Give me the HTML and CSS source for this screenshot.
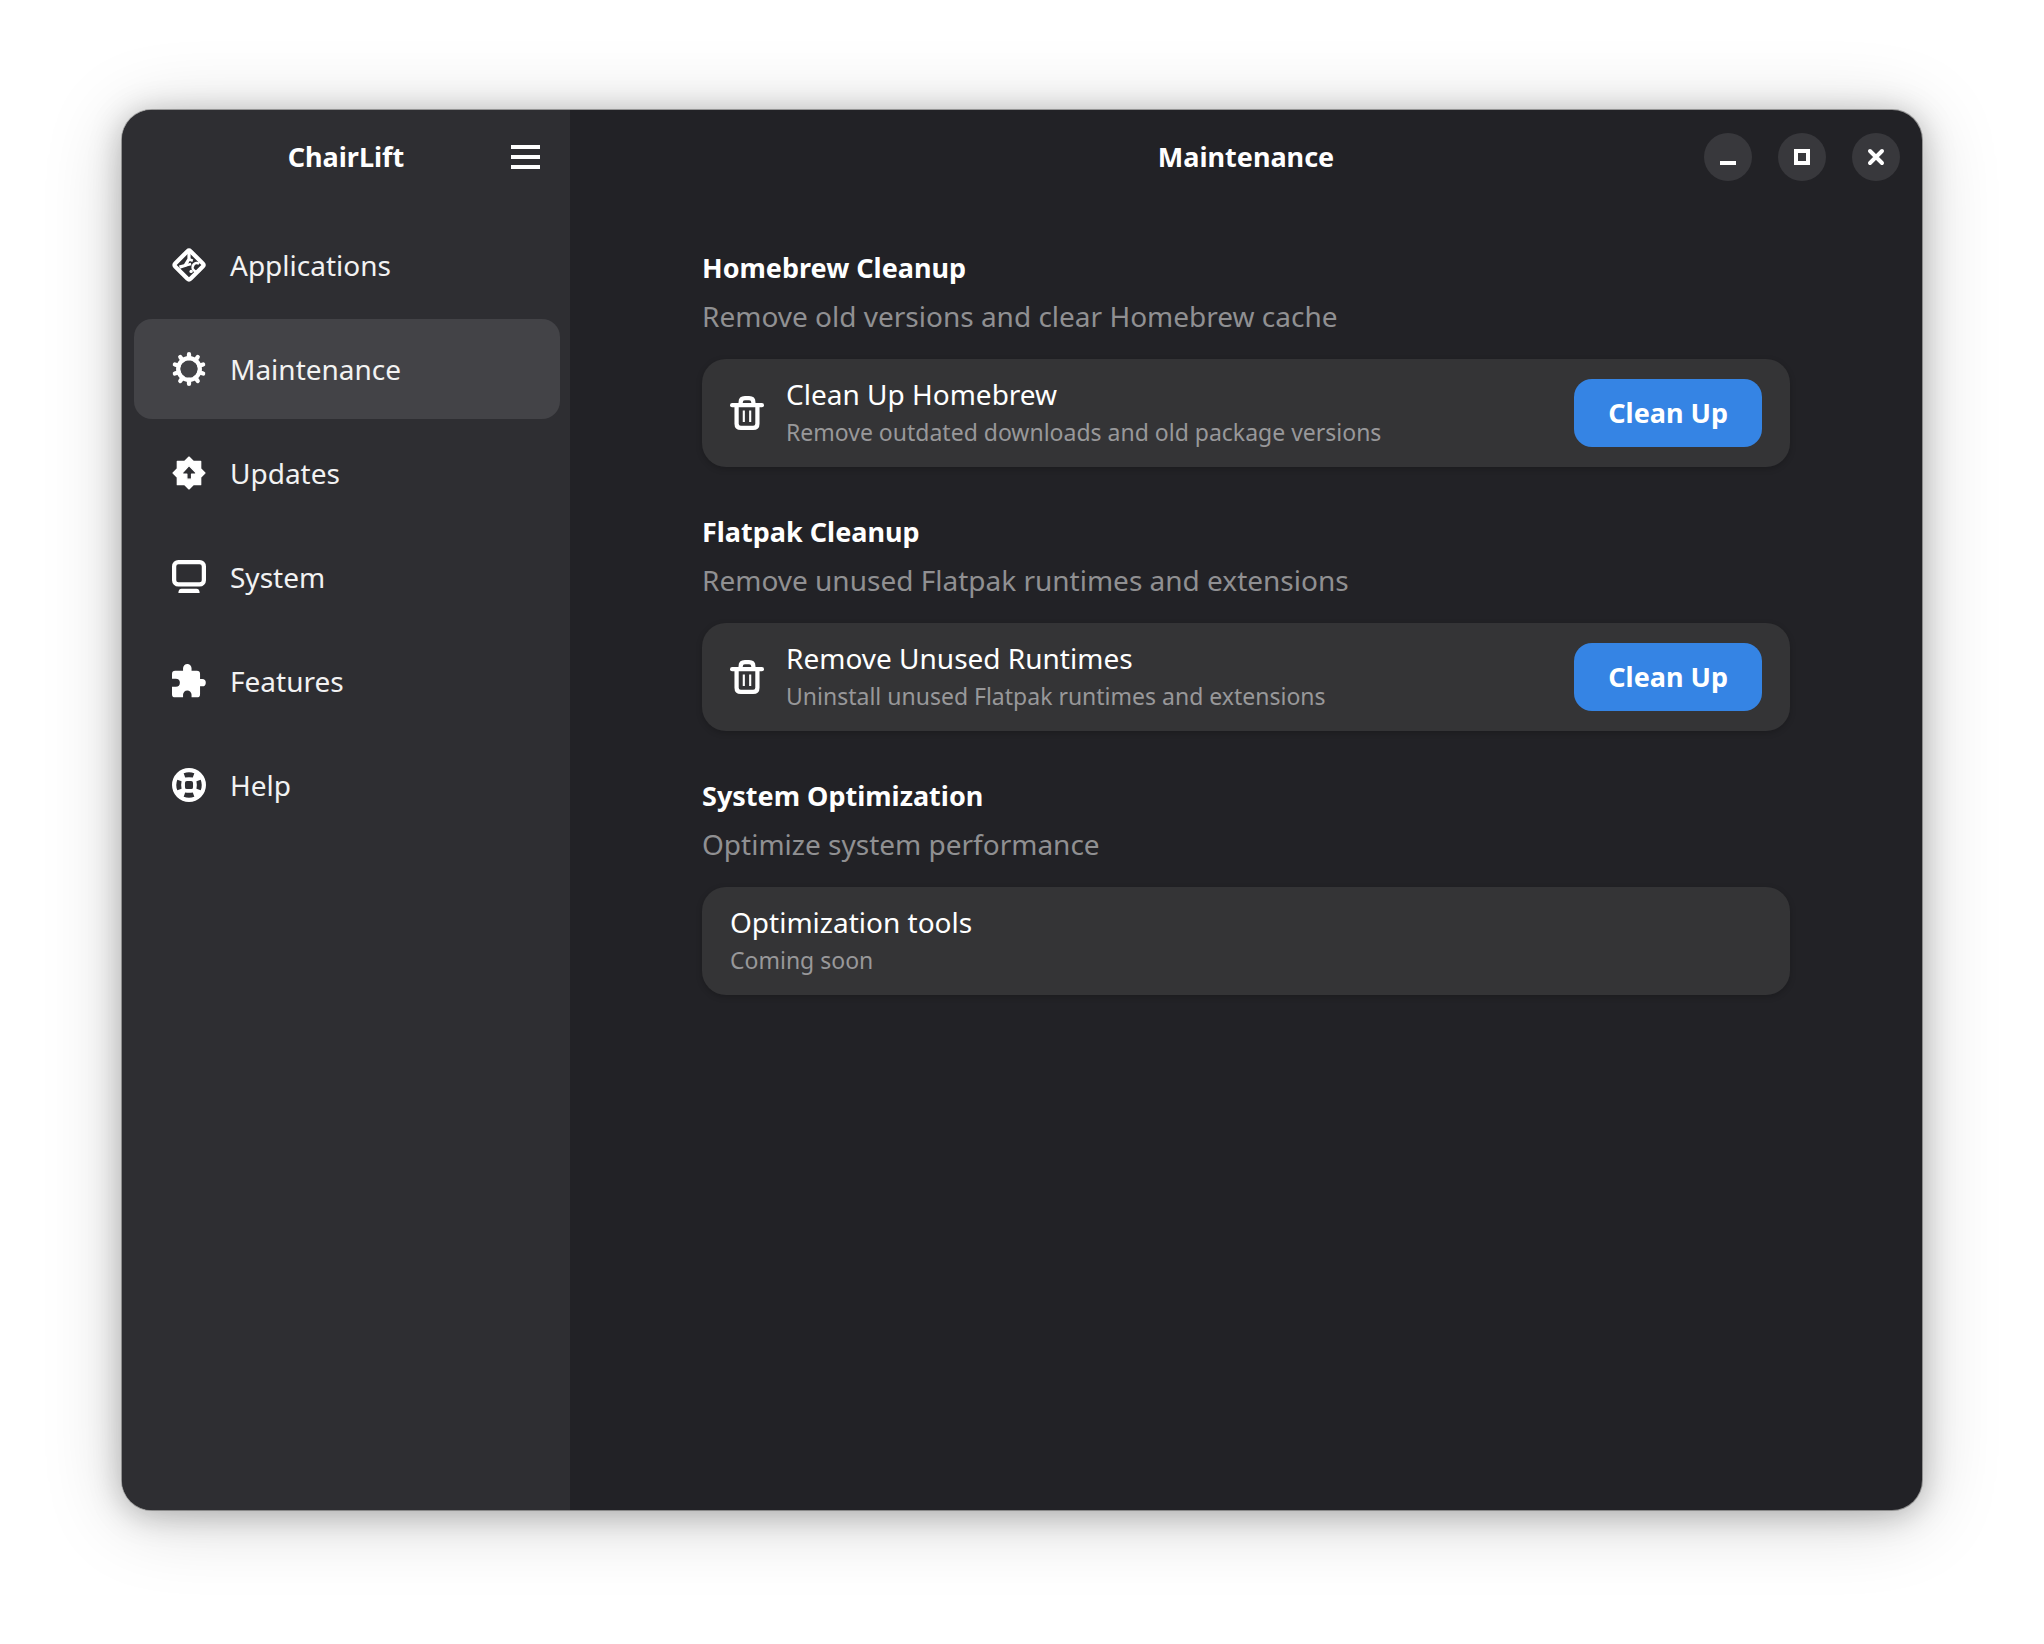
FILE: index.html
```html
<!DOCTYPE html>
<html lang="en">
<head>
    <meta charset="UTF-8">
    <meta name="viewport" content="width=device-width, initial-scale=1.0">
    <title>ChairLift</title>
    <link rel="stylesheet" href="styles.css">
</head>
<body>

    <!-- Shared icon shapes -->
    <svg class="sprite" aria-hidden="true">
        <symbol id="icon-trash" viewBox="0 0 16 16">
            <path d="M1 4.300h14" stroke="currentColor" stroke-width="2" stroke-linecap="round"/>
            <path d="M5 4V3q0-2 2-2h2q2 0 2 2v1M3.100 5v8q0 2 2 2h5.800q2 0 2-2V5" fill="none" stroke="currentColor" stroke-width="2"/>
            <path d="M6.500 6.800v5.400M9.500 6.800v5.400" stroke="currentColor" stroke-width="1"/>
        </symbol>
    </svg>

    <div class="window">
        <aside class="sidebar">
            <header class="headerbar">
                <h1 class="title">ChairLift</h1>
                <button class="menu-button" aria-label="Main menu">
                    <svg class="icon" viewBox="0 0 34 34"><path d="M2 7h29M2 17h29M2 27h29" stroke="currentColor" stroke-width="4"/></svg>
                </button>
            </header>
            <nav class="nav">
                <a class="nav-item" href="#applications">
                    <svg class="icon" viewBox="0 0 16 16">
                        <path d="M7.300 1.500 1.500 7.300q-.7.700 0 1.400l5.800 5.800q.7.700 1.400 0l5.800-5.800q.7-.7 0-1.400L8.700 1.500q-.7-.7-1.400 0z" fill="none" stroke="currentColor" stroke-width="2"/>
                        <path d="M8 2v3.200L6.200 8.200 3.500 9" fill="none" stroke="currentColor" stroke-width="1.500"/>
                        <path d="M6.200 8.200 9 7.500M8 5.300l1.800.7" stroke="currentColor" stroke-width="1.200"/>
                        <path d="M12.800 7.400a2 2 0 1 0 .2 3.200" fill="none" stroke="currentColor" stroke-width="1.200"/>
                        <circle cx="9" cy="11" r=".8" fill="currentColor"/>
                    </svg>
                    Applications
                </a>
                <a class="nav-item active" href="#maintenance" aria-current="page">
                    <svg class="icon" viewBox="0 0 16 16">
                        <circle cx="8" cy="8" r="5.100" fill="none" stroke="currentColor" stroke-width="2"/>
                        <g stroke="currentColor" stroke-width="2" stroke-linecap="round">
                            <path d="M8 1v2M8 13v2"/>
                            <path d="M8 1v2M8 13v2" transform="rotate(36 8 8)"/>
                            <path d="M8 1v2M8 13v2" transform="rotate(72 8 8)"/>
                            <path d="M8 1v2M8 13v2" transform="rotate(108 8 8)"/>
                            <path d="M8 1v2M8 13v2" transform="rotate(144 8 8)"/>
                        </g>
                    </svg>
                    Maintenance
                </a>
                <a class="nav-item" href="#updates">
                    <svg class="icon" viewBox="0 0 16 16">
                        <path d="M8 .500 10 2.500h3.500V6l2 2-2 2v3.500H10l-2 2-2-2H2.500V10l-2-2 2-2V2.500H6zM8 4.500 5 7.800v.7h2v2.400h2.200V8.500h2v-.7z" fill="currentColor" fill-rule="evenodd" stroke="currentColor" stroke-width=".6" stroke-linejoin="round"/>
                    </svg>
                    Updates
                </a>
                <a class="nav-item" href="#system">
                    <svg class="icon" viewBox="0 0 16 16">
                        <rect x="1" y="1" width="14" height="10.500" rx="2" fill="none" stroke="currentColor" stroke-width="2"/>
                        <path d="M4.500 13.500h7q1.500 0 1.500 2H3q0-2 1.500-2z" fill="currentColor"/>
                    </svg>
                    System
                </a>
                <a class="nav-item" href="#features">
                    <svg class="icon" viewBox="0 0 16 16">
                        <path d="M1.500 3.200H5.200V2a2 2 0 0 1 4 0v1.200h2.500q1.500 0 1.500 1.500v2.400h1a1.700 1.700 0 0 1 0 3.400h-1v3.700q0 1.500-1.500 1.500H9.200v-1.200a2 2 0 0 0-4 0v1.200H1.500Q0 15.700 0 14.200v-3.500h1.800a1.900 1.900 0 0 0 0-3.800H0V4.700q0-1.500 1.500-1.500z" fill="currentColor"/>
                    </svg>
                    Features
                </a>
                <a class="nav-item" href="#help">
                    <svg class="icon" viewBox="0 0 16 16">
                        <path d="M8 0a8 8 0 1 0 0 16A8 8 0 1 0 8 0zM5.500 2.500Q8 1.500 10.500 2.500L9.800 4.500Q8 4.100 6.200 4.500zM5.500 13.500Q8 14.500 10.500 13.500L9.800 11.500Q8 11.900 6.200 11.500zM2.500 5.500Q1.500 8 2.500 10.500L4.500 9.800Q4.100 8 4.500 6.200zM13.500 5.500Q14.500 8 13.500 10.500L11.500 9.800Q11.900 8 11.500 6.200zM7 6.100h2q.9 0 .9.900v2q0 .9-.9.900H7q-.9 0-.9-.9V7q0-.9.9-.9z" fill="currentColor" fill-rule="evenodd"/>
                    </svg>
                    Help
                </a>
            </nav>
        </aside>

        <main class="content">
            <header class="headerbar">
                <h2 class="title">Maintenance</h2>
                <div class="window-controls">
                    <button class="control" aria-label="Minimize">
                        <svg viewBox="0 0 48 48"><path d="M16 30h16" stroke="currentColor" stroke-width="4"/></svg>
                    </button>
                    <button class="control" aria-label="Maximize">
                        <svg viewBox="0 0 48 48"><path d="M18 18h12v12H18z" fill="none" stroke="currentColor" stroke-width="4"/></svg>
                    </button>
                    <button class="control" aria-label="Close">
                        <svg viewBox="0 0 48 48"><path d="m18 18 12 12M30 18 18 30" stroke="currentColor" stroke-width="4" stroke-linecap="round"/></svg>
                    </button>
                </div>
            </header>

            <div class="page">
                <section class="group">
                    <h3 class="group-title">Homebrew Cleanup</h3>
                    <p class="group-desc">Remove old versions and clear Homebrew cache</p>
                    <div class="card">
                        <svg class="icon"><use href="#icon-trash"/></svg>
                        <div class="card-text">
                            <p class="card-title">Clean Up Homebrew</p>
                            <p class="card-subtitle">Remove outdated downloads and old package versions</p>
                        </div>
                        <button class="button">Clean Up</button>
                    </div>
                </section>

                <section class="group">
                    <h3 class="group-title">Flatpak Cleanup</h3>
                    <p class="group-desc">Remove unused Flatpak runtimes and extensions</p>
                    <div class="card">
                        <svg class="icon"><use href="#icon-trash"/></svg>
                        <div class="card-text">
                            <p class="card-title">Remove Unused Runtimes</p>
                            <p class="card-subtitle">Uninstall unused Flatpak runtimes and extensions</p>
                        </div>
                        <button class="button">Clean Up</button>
                    </div>
                </section>

                <section class="group">
                    <h3 class="group-title">System Optimization</h3>
                    <p class="group-desc">Optimize system performance</p>
                    <div class="card">
                        <div class="card-text">
                            <p class="card-title">Optimization tools</p>
                            <p class="card-subtitle">Coming soon</p>
                        </div>
                    </div>
                </section>
            </div>
        </main>
    </div>

</body>
</html>
```
FILE: styles.css
```css
* {
    box-sizing: border-box;
}
body {
    margin: 0;
    padding: 110px 122px 134px;
    min-height: 100vh;
    display: flex;
    background-color: #fff;
    color: #fff;
    font-family: "Noto Sans", sans-serif;
    font-size: 28px;
    line-height: 38px;
}
h1, h2, h3, p {
    margin: 0;
    font-size: inherit;
}
button {
    border: none;
    padding: 0;
    color: inherit;
    font: inherit;
    cursor: pointer;
}
.sprite {
    display: none;
}
.icon {
    width: 34px;
    height: 34px;
    flex: none;
    display: block;
    color: #fff;
}
.window {
    flex: 1;
    display: flex;
    border-radius: 30px;
    overflow: hidden;
    background-color: #222226;
    box-shadow: 0 0 0 1px rgba(0, 0, 0, 0.3), 0 4px 32px rgba(0, 0, 0, 0.26), 0 8px 80px rgba(0, 0, 0, 0.18);
}
.sidebar {
    flex: 0 0 448px;
    background-color: #2e2e32;
}
.headerbar {
    display: grid;
    grid-template-columns: 1fr auto 1fr;
    align-items: center;
    height: 94px;
    padding: 0 22px;
}
.title {
    grid-column: 2;
    font-size: 27px;
    font-weight: 700;
}
.menu-button {
    justify-self: end;
    padding: 5px;
    background: none;
}
.nav {
    display: flex;
    flex-direction: column;
    gap: 4px;
    padding: 11px 10px 11px 12px;
}
.nav-item {
    display: flex;
    align-items: center;
    gap: 24px;
    height: 100px;
    padding: 0 38px;
    border-radius: 18px;
    color: #f2f2f2;
    text-decoration: none;
}
.nav-item.active {
    background-color: #434347;
}
.content {
    flex: 1;
}
.window-controls {
    display: flex;
    justify-self: end;
    gap: 26px;
}
.control {
    width: 48px;
    height: 48px;
    border-radius: 50%;
    background-color: #38383c;
}
.control svg {
    display: block;
}
.page {
    display: flex;
    flex-direction: column;
    gap: 46px;
    max-width: 1088px;
    margin: 0 auto;
    padding: 45px 0;
}
.group-title {
    font-size: 27px;
    font-weight: 700;
    margin-bottom: 10px;
}
.group-desc {
    color: #909092;
    margin-bottom: 24px;
}
.card {
    display: flex;
    align-items: center;
    gap: 22px;
    height: 108px;
    padding: 0 28px;
    border-radius: 24px;
    background-color: #343436;
    box-shadow: 0 2px 6px rgba(0, 0, 0, 0.2);
}
.card-text {
    flex: 1;
}
.card-subtitle {
    color: #98989a;
    font-size: 23px;
}
.button {
    height: 68px;
    padding: 0 34px;
    border-radius: 18px;
    background-color: #3584e4;
    font-size: 27px;
    font-weight: 700;
}
```
